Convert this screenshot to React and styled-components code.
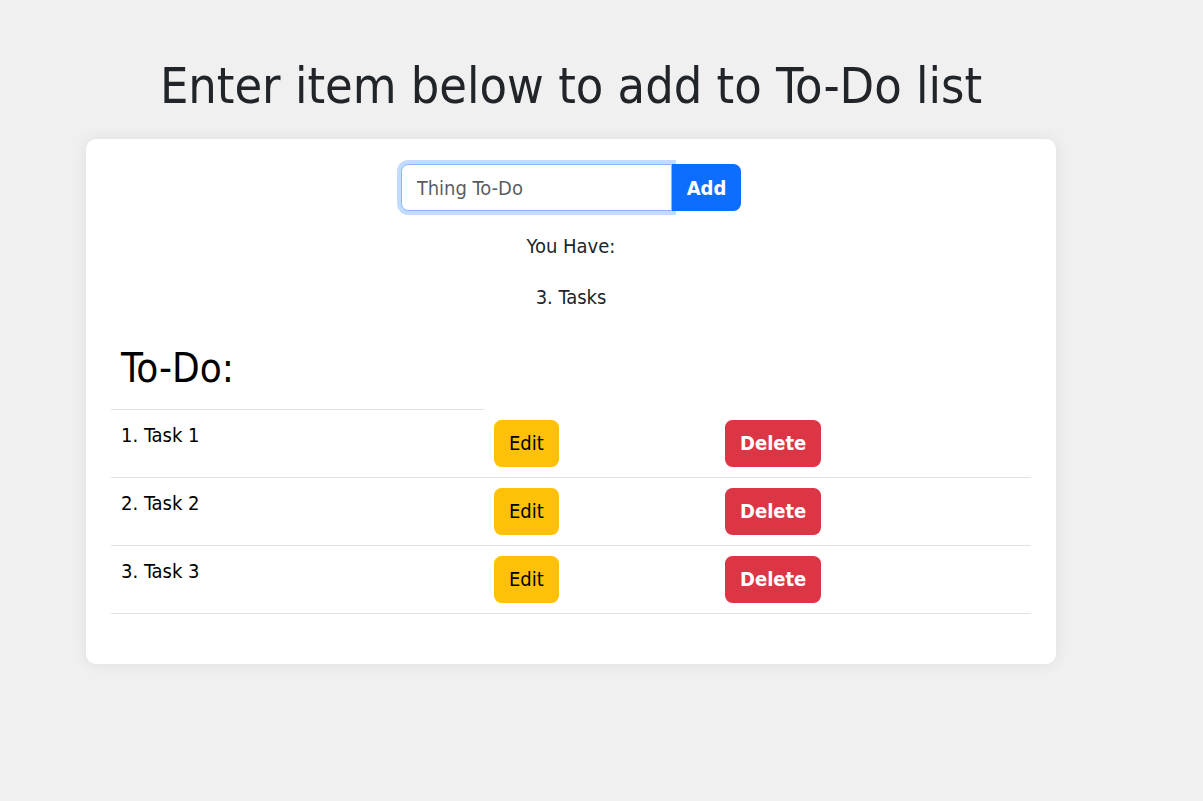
import React from 'react';
import styled, { createGlobalStyle } from 'styled-components';

const GlobalStyle = createGlobalStyle`
    body {
        margin: 0;
        background-color: #f0f0f0;
        font-family: "DejaVu Sans", Tahoma, sans-serif;
        font-stretch: condensed;
        color: #212529;
    }
    * {
        box-sizing: border-box;
    }
`

const Main = styled.div`
    width: 970px;
    margin-left: 86px;
    padding-bottom: 40px;
`

const Title = styled.h1`
    margin: 56px 0 23px;
    font-size: 50px;
    font-weight: 400;
    line-height: 60px;
    text-align: center;
    color: #212529;
`

const Card = styled.div`
    background-color: white;
    border-radius: 10px;
    padding: 25px 25px 30px;
    box-shadow: 0 0 15px rgba(0, 0, 0, 0.08);
`

const InputGroup = styled.div`
    display: flex;
    justify-content: center;
`

const Input = styled.input`
    width: 271px;
    height: 47px;
    padding: 0 15px;
    font-family: inherit;
    font-stretch: condensed;
    font-size: 20px;
    color: #212529;
    border: 1px solid #86b7fe;
    border-radius: 7.5px 0 0 7.5px;
    box-shadow: 0 0 0 4px rgba(13, 110, 253, 0.25);
    outline: none;
    &::placeholder {
        color: rgba(33, 37, 41, 0.75);
    }
`

const Button = styled.button`
    height: 47px;
    padding: 0 15px;
    font-family: inherit;
    font-stretch: condensed;
    font-size: 20px;
    font-weight: ${props => props.bold ? 700 : 400};
    color: ${props => props.textColor};
    background-color: ${props => props.color};
    border: none;
    border-radius: ${props => props.attached ? '0 7.5px 7.5px 0' : '7.5px'};
    position: relative;
    cursor: pointer;
`

const Info = styled.p`
    margin: ${props => props.top}px 0 0;
    font-size: 20px;
    line-height: 30px;
    text-align: center;
    color: #212529;
`

const Table = styled.table`
    width: 920px;
    margin-top: 20px;
    margin-bottom: 20px;
    border-collapse: collapse;
    table-layout: fixed;
    color: black;
`

const Col = styled.col`
    width: ${props => props.width}px;
`

const HeadCell = styled.th`
    padding: 12px 10px 17px;
    font-size: 40px;
    font-weight: 400;
    line-height: 48px;
    text-align: left;
    border-bottom: 1px solid #dee2e6;
`

const Cell = styled.td`
    padding: 10px;
    font-size: 20px;
    line-height: 30px;
    vertical-align: top;
    border-bottom: 1px solid #dee2e6;
`

const tasks = ['Task 1', 'Task 2', 'Task 3']

export default () => {
    return (
        <>
            <GlobalStyle />
            <Main>
                <Title>Enter item below to add to To-Do list</Title>
                <Card>
                    <InputGroup>
                        <Input placeholder="Thing To-Do" />
                        <Button attached bold color="#0d6efd" textColor="white">Add</Button>
                    </InputGroup>
                    <Info top={20}>You Have:</Info>
                    <Info top={21}>{tasks.length}. Tasks</Info>
                    <Table>
                        <colgroup>
                            <Col width={373} />
                            <Col width={231} />
                            <Col width={316} />
                        </colgroup>
                        <thead>
                            <tr>
                                <HeadCell>To-Do:</HeadCell>
                            </tr>
                        </thead>
                        <tbody>
                            {tasks.map((task, i) => (
                                <tr key={task}>
                                    <Cell>{i + 1}. {task}</Cell>
                                    <Cell>
                                        <Button color="#ffc107" textColor="black">Edit</Button>
                                    </Cell>
                                    <Cell>
                                        <Button bold color="#dc3545" textColor="white">Delete</Button>
                                    </Cell>
                                </tr>
                            ))}
                        </tbody>
                    </Table>
                </Card>
            </Main>
        </>
    )
}
